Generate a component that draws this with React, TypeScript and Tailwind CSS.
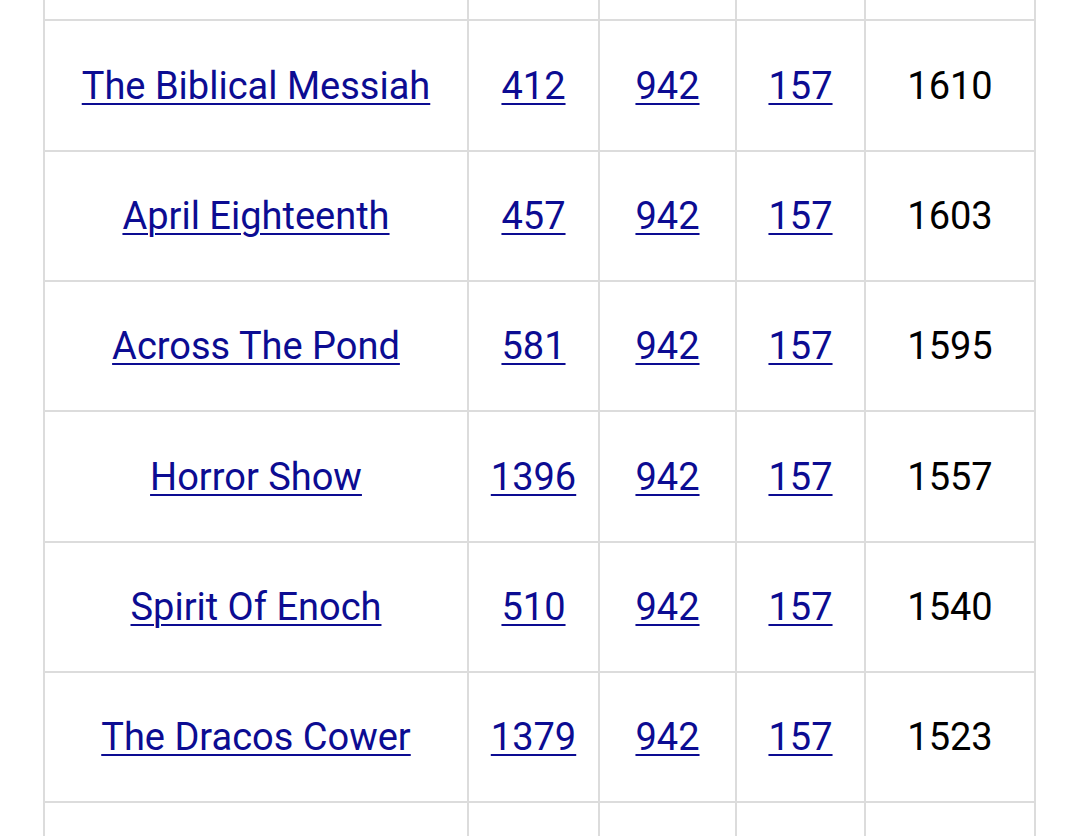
const rows = [
  { name: "The Biblical Messiah", a: "412", b: "942", c: "157", d: "1610", h: "h-[131px]" },
  { name: "April Eighteenth", a: "457", b: "942", c: "157", d: "1603", h: "h-[130px]" },
  { name: "Across The Pond", a: "581", b: "942", c: "157", d: "1595", h: "h-[130px]" },
  { name: "Horror Show", a: "1396", b: "942", c: "157", d: "1557", h: "h-[131px]" },
  { name: "Spirit Of Enoch", a: "510", b: "942", c: "157", d: "1540", h: "h-[130px]" },
  { name: "The Dracos Cower", a: "1379", b: "942", c: "157", d: "1523", h: "h-[130px]" },
];

const cell = "flex items-center justify-center border-r-2 border-[#dcdcdc]";
const link = "text-[#0c0c92] underline decoration-2 underline-offset-[4px]";

export default function App() {
  return (
    <div className="min-h-screen bg-white overflow-hidden" style={{ fontFamily: "Roboto, 'Noto Sans', sans-serif" }}>
      <div className="ml-[43px] w-[993px] border-l-2 border-[#dcdcdc] text-[38px] leading-none">
        {/* partial row cut at top */}
        <div className="flex h-[21px] border-b-2 border-[#dcdcdc]">
          <div className={`${cell} w-[424px]`} />
          <div className={`${cell} w-[131px]`} />
          <div className={`${cell} w-[137px]`} />
          <div className={`${cell} w-[129px]`} />
          <div className={`${cell} w-[170px]`} />
        </div>
        {rows.map((r) => (
          <div key={r.name} className={`flex ${r.h} border-b-2 border-[#dcdcdc]`}>
            <div className={`${cell} w-[424px]`}>
              <a href="#" className={link}>{r.name}</a>
            </div>
            <div className={`${cell} w-[131px]`}>
              <a href="#" className={link}>{r.a}</a>
            </div>
            <div className={`${cell} w-[137px]`}>
              <a href="#" className={link}>{r.b}</a>
            </div>
            <div className={`${cell} w-[129px]`}>
              <a href="#" className={link}>{r.c}</a>
            </div>
            <div className={`${cell} w-[170px] text-black`}>{r.d}</div>
          </div>
        ))}
        {/* partial row cut at bottom */}
        <div className="flex h-[60px]">
          <div className={`${cell} w-[424px]`} />
          <div className={`${cell} w-[131px]`} />
          <div className={`${cell} w-[137px]`} />
          <div className={`${cell} w-[129px]`} />
          <div className={`${cell} w-[170px]`} />
        </div>
      </div>
    </div>
  );
}
